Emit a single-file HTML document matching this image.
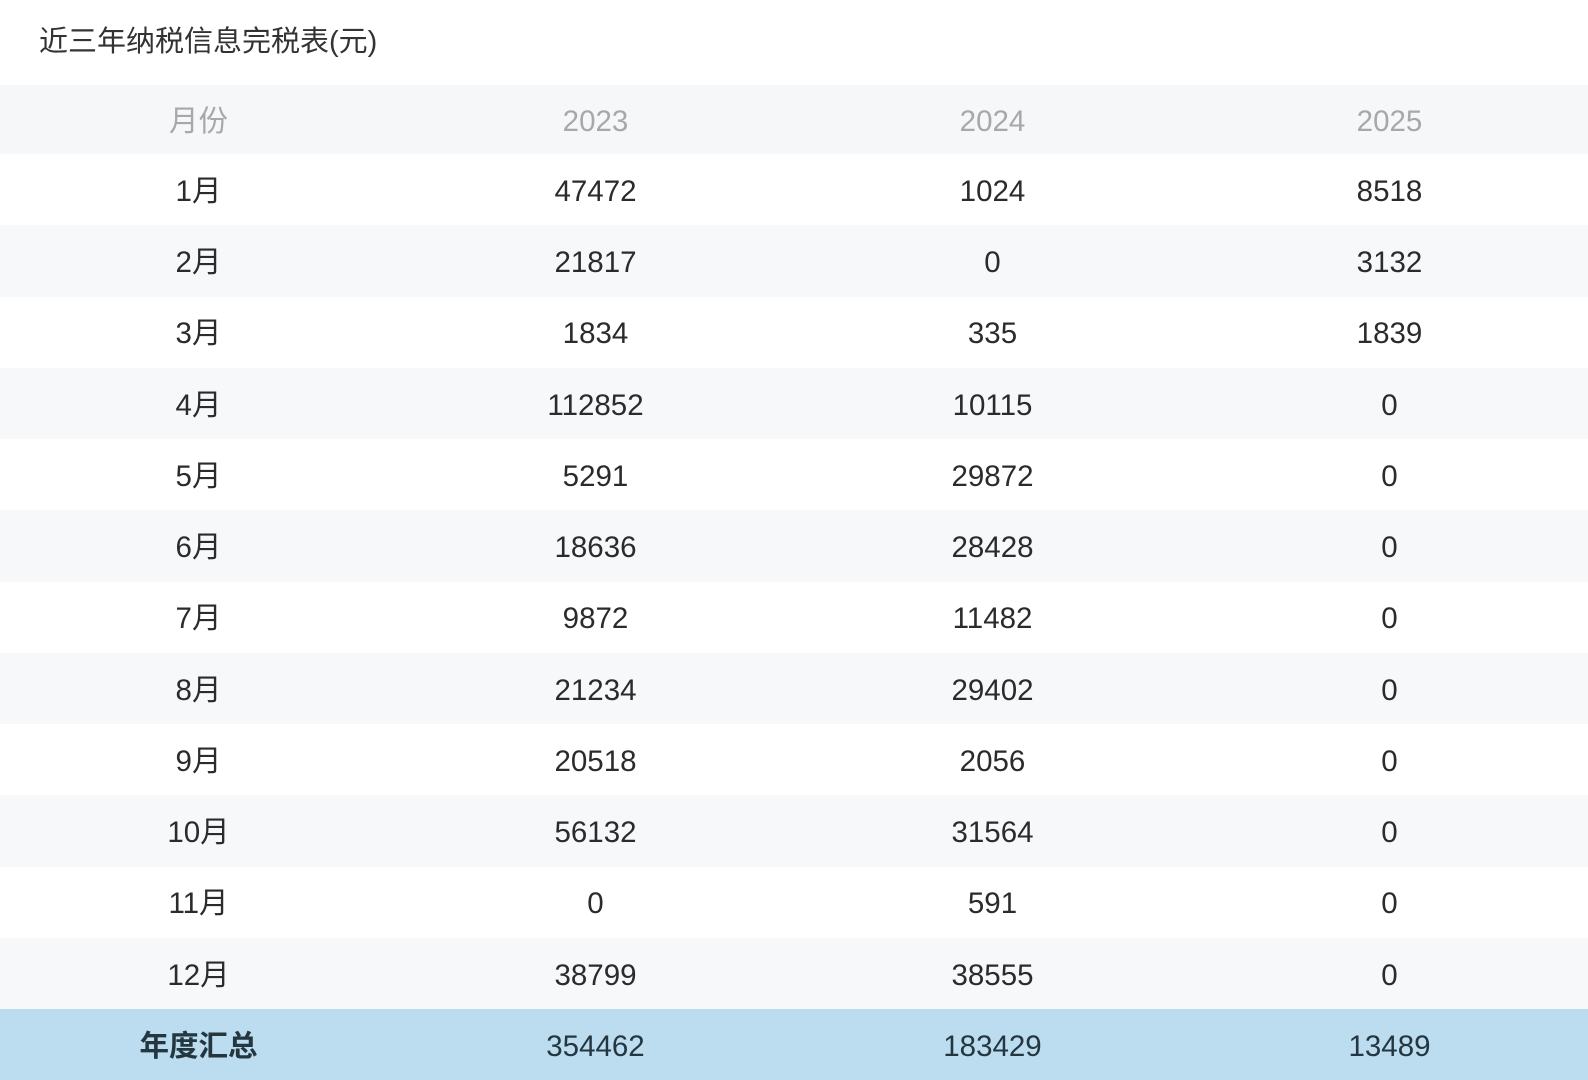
<!DOCTYPE html>
<html><head><meta charset="utf-8"><style>
html,body{margin:0;padding:0;background:#fff;width:1588px;height:1080px;overflow:hidden;font-family:"Liberation Sans","Noto Sans CJK SC",sans-serif;}
.title{position:absolute;left:39px;top:18px;font-size:29px;color:#333;}
.row{position:absolute;left:0;width:1588px;display:flex;align-items:center;}
.row div{width:397px;text-align:center;font-size:29.5px;color:#2b2b2b;line-height:1;padding-top:4px;}
.h{background:#f6f7f9;}
.h div{color:#a8a8a8;}
.g{background:#f7f8fa;}
.t{background:#bcdcef;}
.t div{color:#243640;}
.t div:first-child{font-weight:bold;}
</style></head><body>
<div class="title">近三年纳税信息完税表(元)</div>
<div class="row h" style="top:85px;height:69px"><div>月份</div><div>2023</div><div>2024</div><div>2025</div></div>
<div class="row" style="top:154px;height:71.25px"><div>1月</div><div>47472</div><div>1024</div><div>8518</div></div>
<div class="row g" style="top:225.25px;height:71.25px"><div>2月</div><div>21817</div><div>0</div><div>3132</div></div>
<div class="row" style="top:296.5px;height:71.25px"><div>3月</div><div>1834</div><div>335</div><div>1839</div></div>
<div class="row g" style="top:367.75px;height:71.25px"><div>4月</div><div>112852</div><div>10115</div><div>0</div></div>
<div class="row" style="top:439px;height:71.25px"><div>5月</div><div>5291</div><div>29872</div><div>0</div></div>
<div class="row g" style="top:510.25px;height:71.25px"><div>6月</div><div>18636</div><div>28428</div><div>0</div></div>
<div class="row" style="top:581.5px;height:71.25px"><div>7月</div><div>9872</div><div>11482</div><div>0</div></div>
<div class="row g" style="top:652.75px;height:71.25px"><div>8月</div><div>21234</div><div>29402</div><div>0</div></div>
<div class="row" style="top:724px;height:71.25px"><div>9月</div><div>20518</div><div>2056</div><div>0</div></div>
<div class="row g" style="top:795.25px;height:71.25px"><div>10月</div><div>56132</div><div>31564</div><div>0</div></div>
<div class="row" style="top:866.5px;height:71.25px"><div>11月</div><div>0</div><div>591</div><div>0</div></div>
<div class="row g" style="top:937.75px;height:71.25px"><div>12月</div><div>38799</div><div>38555</div><div>0</div></div>
<div class="row t" style="top:1009px;height:71px"><div>年度汇总</div><div>354462</div><div>183429</div><div>13489</div></div>
</body></html>
